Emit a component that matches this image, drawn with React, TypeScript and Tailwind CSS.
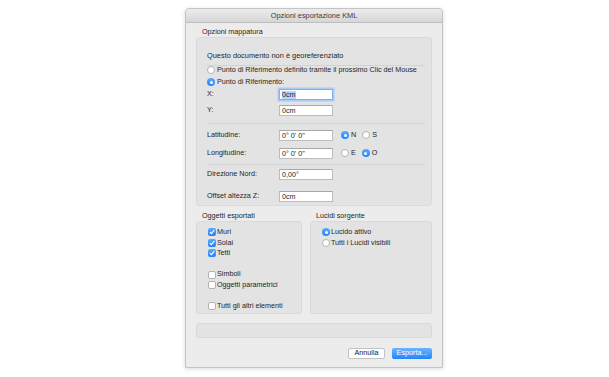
import React from "react";

const font = { fontFamily: '"Liberation Sans", Arial, sans-serif' };

function Radio({ on }: { on?: boolean }) {
  if (on) {
    return (
      <span className="flex h-[8px] w-[8px] flex-none items-center justify-center rounded-full bg-gradient-to-b from-[#5aa9fb] to-[#1c83fb]">
        <span className="h-[3px] w-[3px] rounded-full bg-white" />
      </span>
    );
  }
  return (
    <span className="h-[8px] w-[8px] flex-none rounded-full border border-[#b3b3b3] bg-white" />
  );
}

function Check({ on }: { on?: boolean }) {
  if (on) {
    return (
      <span className="flex h-[8px] w-[8px] flex-none items-center justify-center rounded-[2px] bg-gradient-to-b from-[#5aa9fb] to-[#1c83fb]">
        <svg viewBox="0 0 8 8" className="h-[8px] w-[8px]">
          <path d="M1.8 4.2 L3.3 5.7 L6.3 2.2" fill="none" stroke="white" strokeWidth="1.1" />
        </svg>
      </span>
    );
  }
  return (
    <span className="h-[8px] w-[8px] flex-none rounded-[2px] border border-[#b3b3b3] bg-white" />
  );
}

function Field({ value, focused }: { value: string; focused?: boolean }) {
  return (
    <div
      className={
        focused
          ? "flex h-[11px] w-[54px] items-center border border-[#7fb0ef] bg-white pl-[2px] shadow-[0_0_0_1.5px_#a9cbf6]"
          : "flex h-[11px] w-[54px] items-center border border-[#bdbdbd] border-t-[#a8a8a8] bg-white pl-[2px]"
      }
    >
      <span className={focused ? "bg-[#b4d5fe] leading-[8px]" : "leading-[8px]"}>{value}</span>
    </div>
  );
}

function Sep() {
  return <div className="mr-[5px] h-px bg-[#d2d2d2]" />;
}

function Row({ label, children, className }: { label: string; children: React.ReactNode; className: string }) {
  return (
    <div className={`flex h-[11px] items-center ${className}`}>
      <span className="w-[72px]">{label}</span>
      {children}
    </div>
  );
}

export default function App() {
  return (
    <div className="h-[377px] w-[609px] overflow-hidden bg-white pl-[185px] pt-[8px] text-[7.2px] text-[#1f1f1f]" style={font}>
      <div className="flex h-[360px] w-[258px] flex-col rounded-t-[4px] border border-[#c4c4c4] bg-[#ececec] shadow-[0_1px_4px_rgba(0,0,0,0.15)]">
        <div className="flex h-[14px] flex-none items-center justify-center rounded-t-[4px] border-b border-[#bdbdbd] bg-gradient-to-b from-[#ececec] to-[#d6d6d6] text-[7.4px] text-[#3b3b3b]">
          Opzioni esportazione KML
        </div>

        <div className="flex flex-col px-[10px]">
          <div className="mt-[5px] flex h-[9px] items-center pl-[6px]">Opzioni mappatura</div>

          {/* mapping options group */}
          <div className="flex h-[169px] flex-col rounded-[3px] border border-[#dadada] bg-[#e3e3e3] pl-[10px] pr-[1px]">
            <div className="mt-[12px] flex h-[12px] items-center text-[7.4px]">Questo documento non è georeferenziato</div>
            <div className="mt-[3px]">
              <Sep />
            </div>
            <div className="flex h-[8px] items-center gap-[2px]">
              <Radio />
              <span>Punto di Riferimento definito tramite il prossimo Clic del Mouse</span>
            </div>
            <div className="mt-[4px] flex h-[8px] items-center gap-[2px]">
              <Radio on />
              <span>Punto di Riferimento:</span>
            </div>
            <Row label="X:" className="mt-[3px]">
              <Field value="0cm" focused />
            </Row>
            <Row label="Y:" className="mt-[5px]">
              <Field value="0cm" />
            </Row>
            <div className="mt-[7px]">
              <Sep />
            </div>
            <Row label="Latitudine:" className="mt-[6px]">
              <Field value="0° 0' 0&quot;" />
              <div className="ml-[8px] flex items-center gap-[2px]">
                <Radio on />
                <span>N</span>
              </div>
              <div className="ml-[6px] flex items-center gap-[2px]">
                <Radio />
                <span>S</span>
              </div>
            </Row>
            <Row label="Longitudine:" className="mt-[7px]">
              <Field value="0° 0' 0&quot;" />
              <div className="ml-[8px] flex items-center gap-[2px]">
                <Radio />
                <span>E</span>
              </div>
              <div className="ml-[6px] flex items-center gap-[2px]">
                <Radio on />
                <span>O</span>
              </div>
            </Row>
            <div className="mt-[5px]">
              <Sep />
            </div>
            <Row label="Direzione Nord:" className="mt-[4px]">
              <Field value="0,00°" />
            </Row>
            <Row label="Offset altezza Z:" className="mt-[11px]">
              <Field value="0cm" />
            </Row>
          </div>

          <div className="mt-[6px] flex h-[9px] items-center">
            <span className="w-[114px] pl-[6px]">Oggetti esportati</span>
            <span className="pl-[6px]">Lucidi sorgente</span>
          </div>

          <div className="flex h-[93px] gap-[8px]">
            <div className="flex w-[106px] flex-col rounded-[3px] border border-[#dadada] bg-[#e3e3e3] pl-[11px] pt-[5px]">
              {[
                ["Muri", true],
                ["Solai", true],
                ["Tetti", true],
                ["", false],
                ["Simboli", false],
                ["Oggetti parametrici", false],
                ["", false],
                ["Tutti gli altri elementi", false],
              ].map(([label, on], i) => (
                <div key={i} className="flex h-[10.6px] items-center gap-[1px]">
                  {label ? (
                    <>
                      <Check on={on as boolean} />
                      <span>{label as string}</span>
                    </>
                  ) : null}
                </div>
              ))}
            </div>
            <div className="flex flex-1 flex-col rounded-[3px] border border-[#dadada] bg-[#e3e3e3] pl-[11px] pt-[5px]">
              <div className="flex h-[10.6px] items-center gap-[1px]">
                <Radio on />
                <span>Lucido attivo</span>
              </div>
              <div className="flex h-[10.6px] items-center gap-[1px]">
                <Radio />
                <span>Tutti i Lucidi visibili</span>
              </div>
            </div>
          </div>

          <div className="mt-[9px] h-[15px] rounded-[3px] border border-[#dadada] bg-[#e3e3e3]" />

          <div className="mt-[10px] flex h-[11px] justify-end gap-[7px]">
            <button type="button" className="flex h-[11px] w-[37px] items-center justify-center rounded-[2px] border border-[#c2c2c2] bg-white text-[#222]">
              Annulla
            </button>
            <button type="button" className="flex h-[11px] w-[40px] items-center justify-center rounded-[2px] bg-gradient-to-b from-[#6ab4fb] to-[#1d84fb] text-white">
              Esporta...
            </button>
          </div>
        </div>
      </div>
    </div>
  );
}
